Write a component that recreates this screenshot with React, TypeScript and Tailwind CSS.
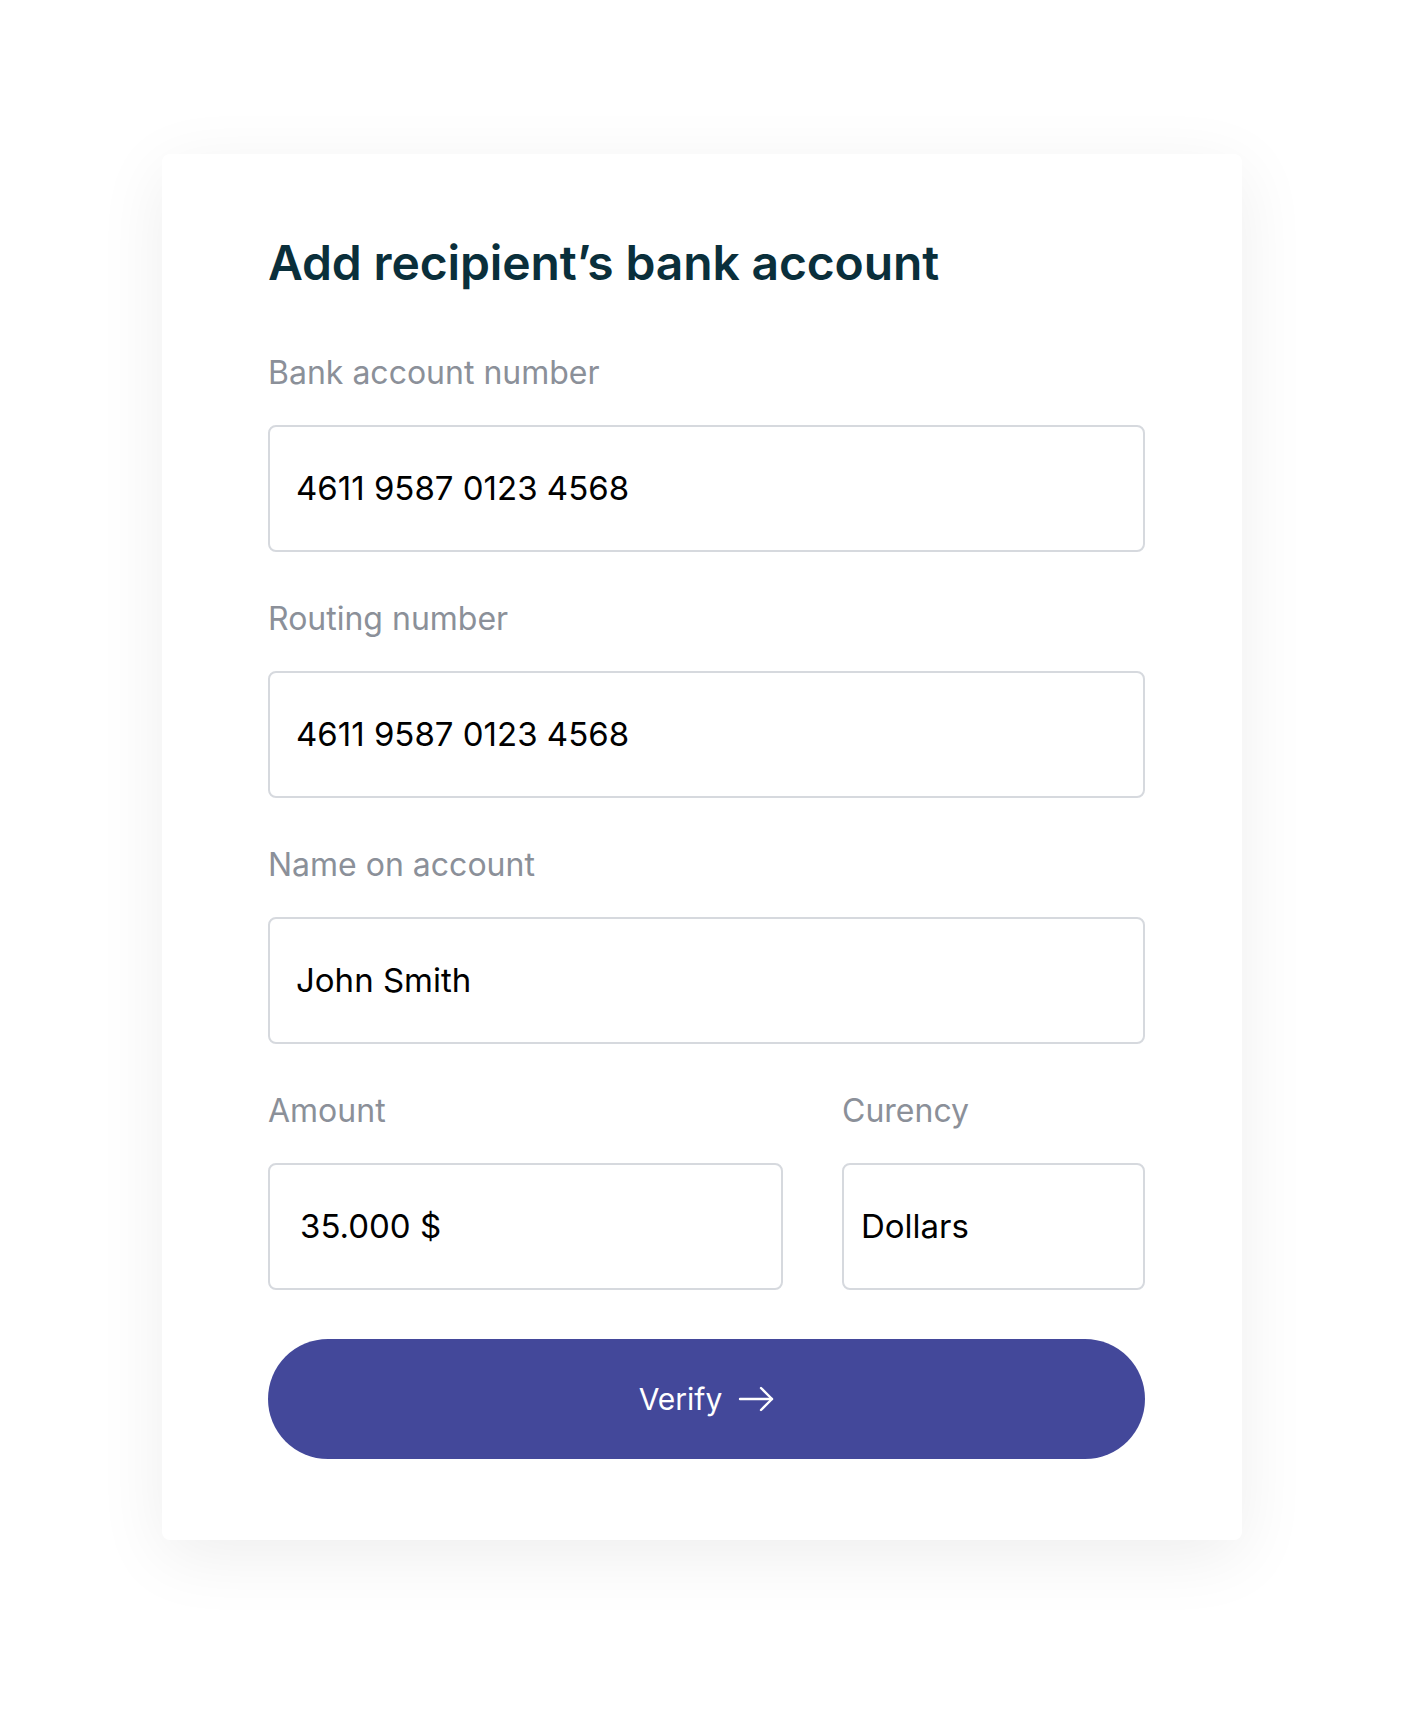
import React from "react";

function Field({
  label,
  value,
  padClass = "pl-[26px]",
}: {
  label: string;
  value: string;
  padClass?: string;
}) {
  return (
    <div className="flex flex-col">
      <div className="h-[38px] flex items-center text-[32px] leading-[38px] text-[#8b9099]">
        {label}
      </div>
      <div
        className={`mt-[33px] h-[127px] rounded-[8px] border-2 border-[#d6d9de] bg-white flex items-center ${padClass} text-[33px] text-black`}
      >
        {value}
      </div>
    </div>
  );
}

export default function App() {
  return (
    <div
      className="min-h-[1710px] w-full bg-white pt-[154px]"
      style={{ fontFamily: "Inter, 'Noto Sans', sans-serif" }}
    >
      <div className="mx-auto w-[1080px] h-[1386px] rounded-[8px] bg-white shadow-[0_16px_70px_rgba(0,0,0,0.07)] pl-[106px] pr-[97px] pt-[62px]">
        <h1 className="h-[94px] flex items-center text-[48px] font-semibold tracking-[-0.003em] text-[#0a2f3b]">
          Add recipient’s bank account
        </h1>
        <div className="mt-[44px] flex flex-col gap-[48px]">
          <Field label="Bank account number" value="4611 9587 0123 4568" />
          <Field label="Routing number" value="4611 9587 0123 4568" />
          <Field label="Name on account" value="John Smith" />
          <div className="flex gap-[59px]">
            <div className="w-[515px]">
              <Field label="Amount" value="35.000 $" padClass="pl-[30px]" />
            </div>
            <div className="flex-1">
              <Field label="Curency" value="Dollars" padClass="pl-[17px]" />
            </div>
          </div>
        </div>
        <button className="mt-[49px] w-full h-[120px] rounded-full bg-[#43489a] flex items-center justify-center gap-[16px] text-white text-[30px]">
          <span>Verify</span>
          <svg
            width="36"
            height="26"
            viewBox="0 0 36 26"
            fill="none"
            stroke="white"
            strokeWidth="2.4"
            strokeLinecap="round"
            strokeLinejoin="round"
          >
            <path d="M2 13H34" />
            <path d="M23 2L34 13L23 24" />
          </svg>
        </button>
      </div>
    </div>
  );
}
